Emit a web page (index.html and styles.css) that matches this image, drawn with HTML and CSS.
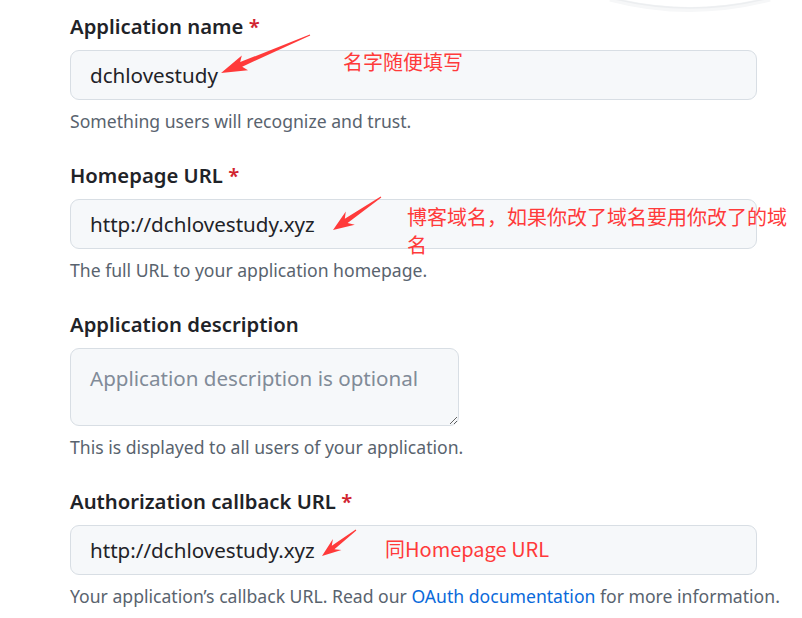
FILE: index.html
```html
<!DOCTYPE html>
<html lang="zh-CN">
<head>
<meta charset="utf-8">
<title>Register a new OAuth application</title>
<link rel="stylesheet" href="styles.css">
</head>
<body>
<svg class="avatar-ring" width="180" height="16" viewBox="600 0 180 16" aria-hidden="true">
  <path d="M610 -1 Q690 20 770 -1" class="ring-soft"/>
  <path d="M615 -1 Q690 17 765 -1" class="ring-line"/>
</svg>
<form class="form">
  <div class="group">
    <label class="label" for="name">Application name <span class="req">*</span></label>
    <input class="field" id="name" type="text" value="dchlovestudy">
    <p class="note">Something users will recognize and trust.</p>
  </div>
  <div class="group">
    <label class="label" for="home">Homepage URL <span class="req">*</span></label>
    <input class="field" id="home" type="text" value="http://dchlovestudy.xyz">
    <p class="note">The full URL to your application homepage.</p>
  </div>
  <div class="group">
    <label class="label" for="desc">Application description</label>
    <textarea class="field area" id="desc" placeholder="Application description is optional"></textarea>
    <p class="note">This is displayed to all users of your application.</p>
  </div>
  <div class="group">
    <label class="label" for="cb">Authorization callback URL <span class="req">*</span></label>
    <input class="field" id="cb" type="text" value="http://dchlovestudy.xyz">
    <p class="note">Your application’s callback URL. Read our <a class="link" href="#">OAuth documentation</a> for more information.</p>
  </div>
</form>

<svg class="arrows" width="802" height="618" viewBox="0 0 802 618" aria-hidden="true">
  <polygon points="310.2,35.5 242.2,66.7 248.0,70.2 221,73 241.8,55.4 240.2,62.1 309.8,34.5"/>
  <polygon points="381.3,197.4 347.6,223.0 354.8,224.7 333,230 345.8,211.5 344.8,218.8 380.7,196.6"/>
  <polygon points="356.3,530.4 334.4,549.2 341.4,550.1 322,556 332.9,538.9 331.8,545.8 355.7,529.6"/>
</svg>
<div class="note-red n1">名字随便填写</div>
<div class="note-red n2">博客域名，如果你改了域名要用你改了的域名</div>
<div class="note-red n3">同Homepage URL</div>
</body>
</html>
```
FILE: styles.css
```css
* { box-sizing: border-box; }
html, body { margin: 0; padding: 0; background: #ffffff; }
body {
  width: 802px;
  height: 618px;
  overflow: hidden;
  position: relative;
  font-family: "Noto Sans", "Liberation Sans", sans-serif;
  color: #1f2328;
}
.avatar-ring {
  position: absolute;
  left: 600px;
  top: 0;
  fill: none;
}
.ring-soft { stroke: #f6f7f8; stroke-width: 5; }
.ring-line { stroke: #eceef0; stroke-width: 1.5; }
.form {
  display: flex;
  flex-direction: column;
  gap: 26px;
  padding: 11px 0 0 70px;
  width: 757px;
}
.group {
  display: flex;
  flex-direction: column;
}
.label {
  font-size: 20.3px;
  line-height: 30px;
  font-weight: 600;
  color: #1f2328;
  margin-bottom: 9px;
}
.req { color: #d1242f; }
.field {
  display: block;
  width: 687px;
  height: 50px;
  padding: 0 19px;
  font-family: "Noto Sans", "Liberation Sans", sans-serif;
  font-size: 20.6px;
  color: #1f2328;
  background: #f6f8fa;
  border: 1px solid #d8dee4;
  border-radius: 9px;
  outline: none;
}
.area {
  width: 389px;
  height: 78px;
  padding: 14px 19px;
  line-height: 30px;
  resize: vertical;
}
.area::placeholder { color: #818b98; }
.note {
  margin: 8px 0 0;
  font-size: 17.6px;
  line-height: 26px;
  color: #59636e;
  white-space: nowrap;
}
.link { color: #0969da; text-decoration: none; }
.arrows {
  position: absolute;
  left: 0;
  top: 0;
  fill: #ff3a3a;
}
.note-red {
  position: absolute;
  font-family: "Noto Sans CJK SC", "Noto Sans", sans-serif;
  font-size: 20px;
  line-height: 28px;
  color: #ff3a3a;
}
.n1 { left: 343px; top: 48px; }
.n2 { left: 407px; top: 203px; width: 385px; }
.n3 { left: 385px; top: 535px; }
```
